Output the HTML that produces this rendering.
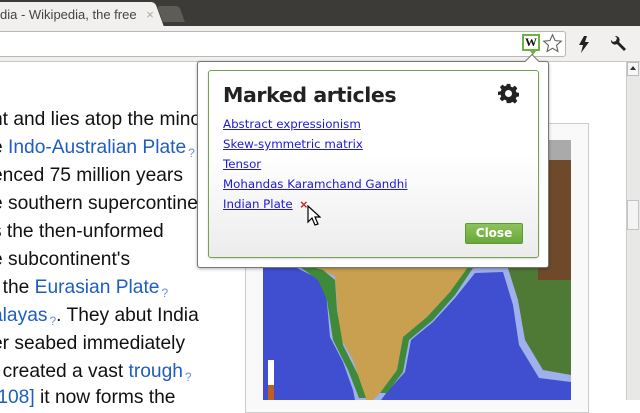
<!DOCTYPE html>
<html><head><meta charset="utf-8"><style>
*{margin:0;padding:0;box-sizing:border-box}
body{width:640px;height:400px;overflow:hidden;position:relative;background:#fff;font-family:"Liberation Sans",sans-serif}
.abs{position:absolute}
.art{position:absolute;left:-8px;font-size:19.2px;color:#111;white-space:nowrap;line-height:28px}
.art a{color:#1f5dc0;text-decoration:none}
.q{font-size:12px;color:#6b8fd0;vertical-align:-4px;margin-left:2px}
.lk{position:absolute;left:223px;font-family:"DejaVu Sans",sans-serif;font-size:11.8px;color:#1a1ad8;text-decoration:underline;white-space:nowrap}
</style></head><body>
<!-- top dark bar -->
<div class="abs" style="left:0;top:0;width:640px;height:28px;background:#3c3b37"></div>
<div class="abs" style="left:0;top:2px;width:150px;height:28px;background:#f1f0ee;border-radius:0 4px 0 0"></div>
<div class="abs" style="left:140px;top:2px;width:20px;height:28px;background:#f1f0ee;transform:skewX(20deg);border-radius:0 4px 0 0"></div>
<div class="abs" style="left:160px;top:6px;width:22px;height:16px;background:#5e5c57;transform:skewX(20deg);border-radius:3px 3px 0 0"></div>
<div class="abs" style="left:0;top:7px;font-size:13px;color:#444;white-space:nowrap">dia - Wikipedia, the free <span style="color:#aaa;margin-left:6px">×</span></div>
<!-- toolbar -->
<div class="abs" style="left:0;top:26px;width:640px;height:36px;background:#f1f0ee;border-bottom:1px solid #c8c7c4"></div>
<div class="abs" style="left:-4px;top:31px;width:570px;height:26px;background:#fff;border:1px solid #b8b7b4;border-radius:3px"></div>
<div class="abs" style="left:522px;top:34px;width:18px;height:17px;border:2px solid #6db33f;background:#fff;font:bold 12px 'Liberation Serif',serif;text-align:center;line-height:13px;color:#111">W</div>
<div class="abs" style="left:530px;top:51px;width:0;height:0;border-left:3px solid transparent;border-right:3px solid transparent;border-top:4px solid #6db33f"></div>
<svg class="abs" style="left:542px;top:33px" width="21" height="21" viewBox="0 0 24 24"><path d="M12 2l2.9 6.6 7.1.7-5.4 4.8 1.6 7-6.2-3.7-6.2 3.7 1.6-7L2 9.3l7.1-.7z" fill="#fff" stroke="#666" stroke-width="1.3"/></svg>
<svg class="abs" style="left:578px;top:36px" width="12" height="17" viewBox="0 0 12 17"><path d="M6 0L1 9h4l-2 8 8-11H7l2-6z" fill="#222"/></svg>
<svg class="abs" style="left:608px;top:35px" width="20" height="20" viewBox="0 0 20 20"><path d="M3 5a4 4 0 0 0 6 4l7 7 2-2-7-7a4 4 0 0 0-4-6l2 2-1 3-3 1z" fill="#222"/></svg>
<!-- scrollbar -->
<div class="abs" style="left:626px;top:62px;width:14px;height:338px;background:#e8e8e6;border-left:1px solid #ccc"></div>
<div class="abs" style="left:627px;top:62px;width:12px;height:14px;background:#f7f7f7;border:1px solid #bbb"></div>
<div class="abs" style="left:630px;top:66px;width:0;height:0;border-left:3px solid transparent;border-right:3px solid transparent;border-bottom:4px solid #333"></div>
<div class="abs" style="left:627px;top:200px;width:12px;height:30px;background:#f4f4f4;border:1px solid #c4c4c4"></div>
<!-- article -->
<div class="art" style="top:106px">nt and lies atop the mino</div>
<div class="art" style="top:134px">e <a>Indo-Australian Plate</a><span class="q">?</span></div>
<div class="art" style="top:162px">enced 75 million years</div>
<div class="art" style="top:190px">e southern supercontine</div>
<div class="art" style="top:218px">s the then-unformed</div>
<div class="art" style="top:246px">e subcontinent's</div>
<div class="art" style="top:274px">, the <a>Eurasian Plate</a><span class="q">?</span></div>
<div class="art" style="top:302px"><a>alayas</a><span class="q">?</span>. They abut India</div>
<div class="art" style="top:330px">er seabed immediately</div>
<div class="art" style="top:358px">t created a vast <a>trough</a><span class="q">?</span></div>
<div class="art" style="top:384px"><a>[108]</a> it now forms the</div>
<!-- image frame -->
<div class="abs" style="left:245px;top:123px;width:344px;height:290px;background:#f9f9f9;border:1px solid #ccc"></div>
<svg class="abs" style="left:263px;top:140px" width="308" height="260" viewBox="0 0 308 260">
<rect width="308" height="260" fill="#c9a050"/>
<rect x="240" width="68" height="240" fill="#4f7a35"/>
<rect x="275" y="0" width="33" height="140" fill="#6e4a2a"/>
<rect x="285" y="0" width="23" height="20" fill="#aaa"/>
<path d="M0,118 L40,122 L72,136 L74,163 L77,197 L90,220 L100,250 L103,260 H0 Z" fill="#9fb0ec"/>
<path d="M0,124 L30,126 L62,142 L64,163 L67,197 L80,222 L90,250 L92,260 H0 Z" fill="#3f4fd0"/>
<path d="M30,122 L60,130 L72,140 L74,170 L80,205 L95,235 L103,258 L96,258 L85,230 L70,200 L64,160 L55,140 Z" fill="#3f8a3a"/>
<path d="M207,127 L244,125 L255,160 L262,200 L280,230 L308,235 V260 H110 L117,253 L134,230 L140,197 L164,177 L187,152 Z" fill="#9fb0ec"/>
<path d="M212,133 L240,132 L250,165 L256,205 L276,238 L308,242 V260 H118 L124,252 L142,232 L148,200 L170,182 L192,158 Z" fill="#3f4fd0"/>
<path d="M205,127 L187,152 L164,177 L140,197 L134,230 L117,253 L124,253 L140,232 L146,200 L170,180 L192,155 L210,128 Z" fill="#3f8a3a"/>
<rect x="0" y="0" width="308" height="126" fill="#c9a050" opacity="0"/>
<rect x="5" y="220" width="6" height="40" fill="#fff"/>
<rect x="5" y="245" width="6" height="15" fill="#c06020"/>
</svg>
<!-- popup -->
<div class="abs" style="left:197px;top:61px;width:352px;height:207px;background:#fff;border:1px solid #777;border-radius:3px;box-shadow:0 1px 3px rgba(0,0,0,.3)"></div>
<div class="abs" style="left:527px;top:56px;width:10px;height:10px;background:#fff;border-left:1px solid #777;border-top:1px solid #777;transform:rotate(45deg)"></div>
<div class="abs" style="left:208px;top:70px;width:331px;height:188px;border:1px solid #78a04e;border-radius:3px;background:linear-gradient(#fff 0%,#fff 45%,#ececec 100%);box-shadow:0 1px 2px rgba(0,0,0,.15)"></div>
<div class="abs" style="left:223px;top:83px;font:bold 20.5px 'DejaVu Sans',sans-serif;color:#222;white-space:nowrap;letter-spacing:-0.4px">Marked articles</div>
<svg class="abs" style="left:498px;top:83px" width="21" height="21" viewBox="0 0 24 24"><path fill="#222" d="M10 1h4l.6 3.1 2 .9 2.7-1.8 2.8 2.8-1.8 2.7.9 2 3.1.6v4l-3.1.6-.9 2 1.8 2.7-2.8 2.8-2.7-1.8-2 .9L14 23h-4l-.6-3.1-2-.9-2.7 1.8-2.8-2.8 1.8-2.7-.9-2L0 14v-4l3.1-.6.9-2L2.2 4.7 5 1.9l2.7 1.8 2-.9zM12 8a4 4 0 1 0 0 8 4 4 0 0 0 0-8z"/></svg>
<div class="lk" style="top:117px">Abstract expressionism</div>
<div class="lk" style="top:137px">Skew-symmetric matrix</div>
<div class="lk" style="top:157px">Tensor</div>
<div class="lk" style="top:177px">Mohandas Karamchand Gandhi</div>
<div class="lk" style="top:197px">Indian Plate</div>
<div class="abs" style="left:300px;top:197px;font:bold 13px sans-serif;color:#c03030">×</div>
<svg class="abs" style="left:307px;top:205px" width="14" height="22" viewBox="0 0 14 22"><path d="M1 1v16l4-4 3 7 3-1-3-7h5z" fill="#fff" stroke="#000" stroke-width="1.2"/></svg>
<div class="abs" style="left:465px;top:223px;width:58px;height:21px;background:linear-gradient(#8cc35a,#69a83a);border:1px solid #5e9a34;border-radius:2px;color:#fff;font:bold 12px 'DejaVu Sans',sans-serif;text-align:center;line-height:19px">Close</div>
</body></html>
